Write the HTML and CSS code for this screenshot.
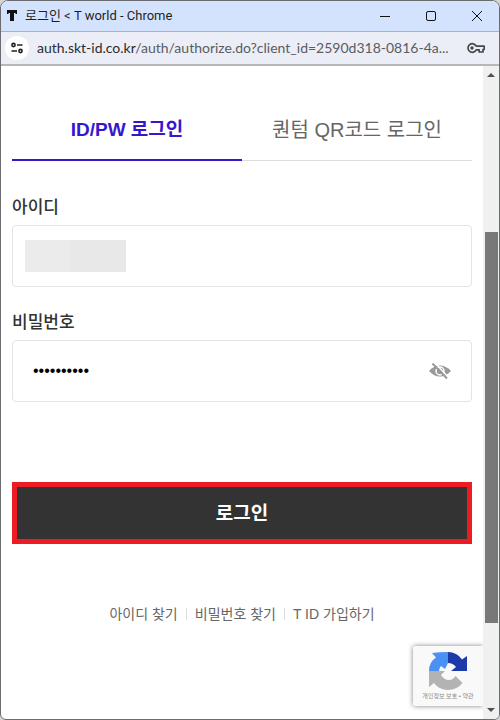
FILE: index.html
```html
<!DOCTYPE html>
<html lang="ko">
<head>
<meta charset="utf-8">
<meta name="viewport" content="width=device-width, initial-scale=1">
<title>로그인 &lt; T world</title>
<link rel="stylesheet" href="styles.css">
</head>
<body>
<div class="window">
  <header class="titlebar">
    <svg class="favicon" width="12" height="12" viewBox="0 0 12 12" aria-hidden="true"><path d="M1 0h10v4H9.500V3H8v8H4V3H2.500v1H1z" fill="#111"/></svg>
    <span class="window-title">로그인 &lt; T world - Chrome</span>
    <div class="window-controls">
      <button type="button" aria-label="최소화"><svg width="12" height="12" viewBox="0 0 12 12"><path d="M1 6.500h10" stroke="#111" fill="none"/></svg></button>
      <button type="button" aria-label="최대화"><svg width="12" height="12" viewBox="0 0 12 12"><rect x="1.500" y="1.500" width="9" height="9" rx="1.500" stroke="#111" fill="none"/></svg></button>
      <button type="button" aria-label="닫기"><svg width="12" height="12" viewBox="0 0 12 12"><path d="M1 1l10 10M11 1L1 11" stroke="#111" fill="none"/></svg></button>
    </div>
  </header>
  <div class="addressbar">
    <button type="button" class="site-info" aria-label="사이트 정보"><svg width="14" height="12" viewBox="0 0 14 12" fill="none" stroke="#202124" stroke-width="1.600"><circle cx="3.500" cy="3" r="1.600"/><path d="M7 3h5.500M1.500 9H7"/><circle cx="10.500" cy="9" r="1.600"/></svg></button>
    <span class="url"><span class="host">auth.skt-id.co.kr</span>/auth/authorize.do?client_id=2590d318-0816-4a...</span>
    <button type="button" class="key" aria-label="비밀번호 관리"><svg width="18" height="12" viewBox="0 0 18 12" fill="none" stroke="#474747" stroke-width="1.700"><path d="M9.200 4.200A4.300 4.300 0 1 0 9.200 7.800H12.200V10H16V7.500H17.200V4.200z" stroke-linejoin="round"/><circle cx="5" cy="6" r="1.700" fill="#474747" stroke="none"/></svg></button>
  </div>
  <div class="viewport">
    <main class="page">
      <nav class="tabs">
        <a class="tab active" href="#login" aria-current="page">ID/PW 로그인</a>
        <a class="tab" href="#qr">퀀텀 QR코드 로그인</a>
      </nav>
      <form class="login" id="login">
        <div class="field">
          <label for="user">아이디</label>
          <input class="masked" id="user" type="text" autocomplete="off">
        </div>
        <div class="field">
          <label for="password">비밀번호</label>
          <div class="password-box">
            <input id="password" type="password" value="abcdefghij">
            <button type="button" class="reveal" aria-label="비밀번호 표시"><svg width="22" height="16" viewBox="0 0 22 16"><path d="M0 8Q5 2.500 11 2.500T22 8q-5 5.500-11 5.500T0 8z" fill="#999"/><circle cx="11" cy="8" r="4" fill="#999" stroke="#fff" stroke-width="1.500"/><path d="M5.500-.5l14 15" stroke="#fff" stroke-width="1.500"/><path d="M3.500.5l14.500 15" stroke="#999" stroke-width="2"/></svg></button>
          </div>
        </div>
        <button class="submit" type="submit">로그인</button>
      </form>
      <nav class="links">
        <a href="#find-id">아이디 찾기</a>
        <a href="#find-password">비밀번호 찾기</a>
        <a href="#join">T ID 가입하기</a>
      </nav>
      <aside class="recaptcha">
        <svg width="38" height="38" viewBox="0 0 38 38" aria-hidden="true">
          <path d="M19 0v11l-3 6-4-3q-2 2-2 5H0Q0 10 7 5.500L3 1q7-1 16-1z" fill="#4a90f5"/>
          <path d="M19 0q9 0 14 7.500L38 4v15H22l5-4q-3-4-8-4z" fill="#1c3aa9"/>
          <path d="M0 19h16l-4 4q3 5 8 5 4 0 6.500-4l7 7Q28 38 19 38 10 38 5 31l-5 4z" fill="#b3b3b3"/>
        </svg>
        <small>개인정보 보호 • 약관</small>
      </aside>
    </main>
    <div class="scrollbar" aria-hidden="true">
      <svg width="8" height="4" viewBox="0 0 8 4"><path d="M0 4l4-4 4 4z" fill="#505050"/></svg>
      <div class="track"><div class="thumb"></div></div>
      <svg width="8" height="4" viewBox="0 0 8 4"><path d="M0 0h8L4 4z" fill="#505050"/></svg>
    </div>
  </div>
</div>
</body>
</html>
```
FILE: styles.css
```css
* { box-sizing: border-box; }

body {
  margin: 0;
  background: #d6d6d6;
  color: #333;
  font-family: "Liberation Sans", "Noto Sans CJK KR", sans-serif;
}

a { color: inherit; text-decoration: none; }

button {
  border: 0;
  padding: 0;
  background: none;
  font: inherit;
  cursor: pointer;
}

svg { display: block; }

.window {
  display: flex;
  flex-direction: column;
  min-height: 100vh;
  border: 1px solid #6b6c6f;
  border-radius: 8px 8px 6px 6px;
  overflow: hidden;
  background: #fff;
}

.titlebar {
  display: flex;
  align-items: center;
  height: 31px;
  padding: 0 16px 0 5px;
  background: #d3e3fd;
  border-bottom: 1px solid #aeb2b9;
}

.window-title {
  flex: 1;
  margin-left: 7px;
  font: 13px/16px Roboto, "Noto Sans CJK KR", sans-serif;
  color: #1f1f1f;
}

.window-controls { display: flex; gap: 34px; }

.addressbar {
  display: flex;
  align-items: center;
  height: 34px;
  padding: 0 14px 0 4px;
  background: #ebeef7;
  border-bottom: 2px solid #b5b6b9;
}

.site-info {
  display: grid;
  place-items: center;
  width: 24px;
  height: 24px;
  border-radius: 50%;
  background: #fff;
}

.url {
  flex: 1;
  min-width: 0;
  margin-left: 8px;
  overflow: hidden;
  white-space: nowrap;
  font: 14px/20px Lato, sans-serif;
  color: #5a5c61;
}

.host { color: #2b2c30; }

.viewport { display: flex; flex: 1; }

.page {
  position: relative;
  flex: 1;
  min-width: 0;
  padding: 31px 11px;
  overflow: hidden;
}

.tabs {
  display: flex;
  border-bottom: 1px solid #ddd;
}

.tab {
  flex: 1;
  height: 64px;
  margin-bottom: -1px;
  border-bottom: 2px solid transparent;
  text-align: center;
  font-size: 20px;
  line-height: 66px;
  color: #666;
}

.tab.active {
  border-color: #3617ce;
  color: #3617ce;
  font-size: 19px;
  font-weight: bold;
}

.login { display: flex; flex-direction: column; padding-top: 32px; }

.field { margin-bottom: 21px; }

.field label {
  display: block;
  height: 32px;
  font-size: 17px;
  font-weight: 500;
  line-height: 30px;
}

.field input {
  display: block;
  width: 100%;
  height: 62px;
  padding: 0 20px;
  border: 1px solid #e3e3e3;
  border-radius: 4px;
  background-color: #fff;
  font: 16px "Liberation Sans", sans-serif;
  color: #000;
}

.field .masked {
  background: linear-gradient(90deg, #ebebeb 45%, #e8e8e8 45%) 12px 50% / 101px 32px no-repeat #fff;
}

.password-box { position: relative; }

.password-box input { padding-right: 60px; }

.reveal {
  position: absolute;
  top: 0;
  bottom: 0;
  right: 21px;
}

.submit {
  height: 62px;
  margin-top: 59px;
  padding-bottom: 4px;
  border: 5px solid #ed1c24;
  background: #333;
  color: #fff;
  font-size: 19px;
  font-weight: bold;
}

.links {
  display: flex;
  justify-content: center;
  margin-top: 60px;
  font-size: 14px;
  line-height: 20px;
  color: #666;
}

.links a {
  display: flex;
  align-items: center;
}

.links a + a::before {
  content: "";
  width: 1px;
  height: 12px;
  margin: 0 8px;
  background: #ddd;
}

.recaptcha {
  position: absolute;
  right: 0;
  bottom: 13px;
  display: flex;
  flex-direction: column;
  align-items: center;
  width: 70px;
  height: 60px;
  padding-top: 6px;
  border-radius: 2px 0 0 2px;
  background: #f9f9f9;
  box-shadow: 0 0 5px #808080;
}

.recaptcha small {
  font-size: 6px;
  line-height: 12px;
  white-space: nowrap;
  color: #888;
}

.scrollbar {
  display: flex;
  flex-direction: column;
  align-items: center;
  width: 16px;
  padding: 7px 0;
  background: #f0f0f0;
}

.track {
  flex: 1;
  align-self: stretch;
  display: flex;
  flex-direction: column;
  margin: 6px 1px 6px 2px;
}

.track::before { content: ""; flex: 149; }

.track::after { content: ""; flex: 79; }

.thumb { flex: 391; background: #787878; }
```
